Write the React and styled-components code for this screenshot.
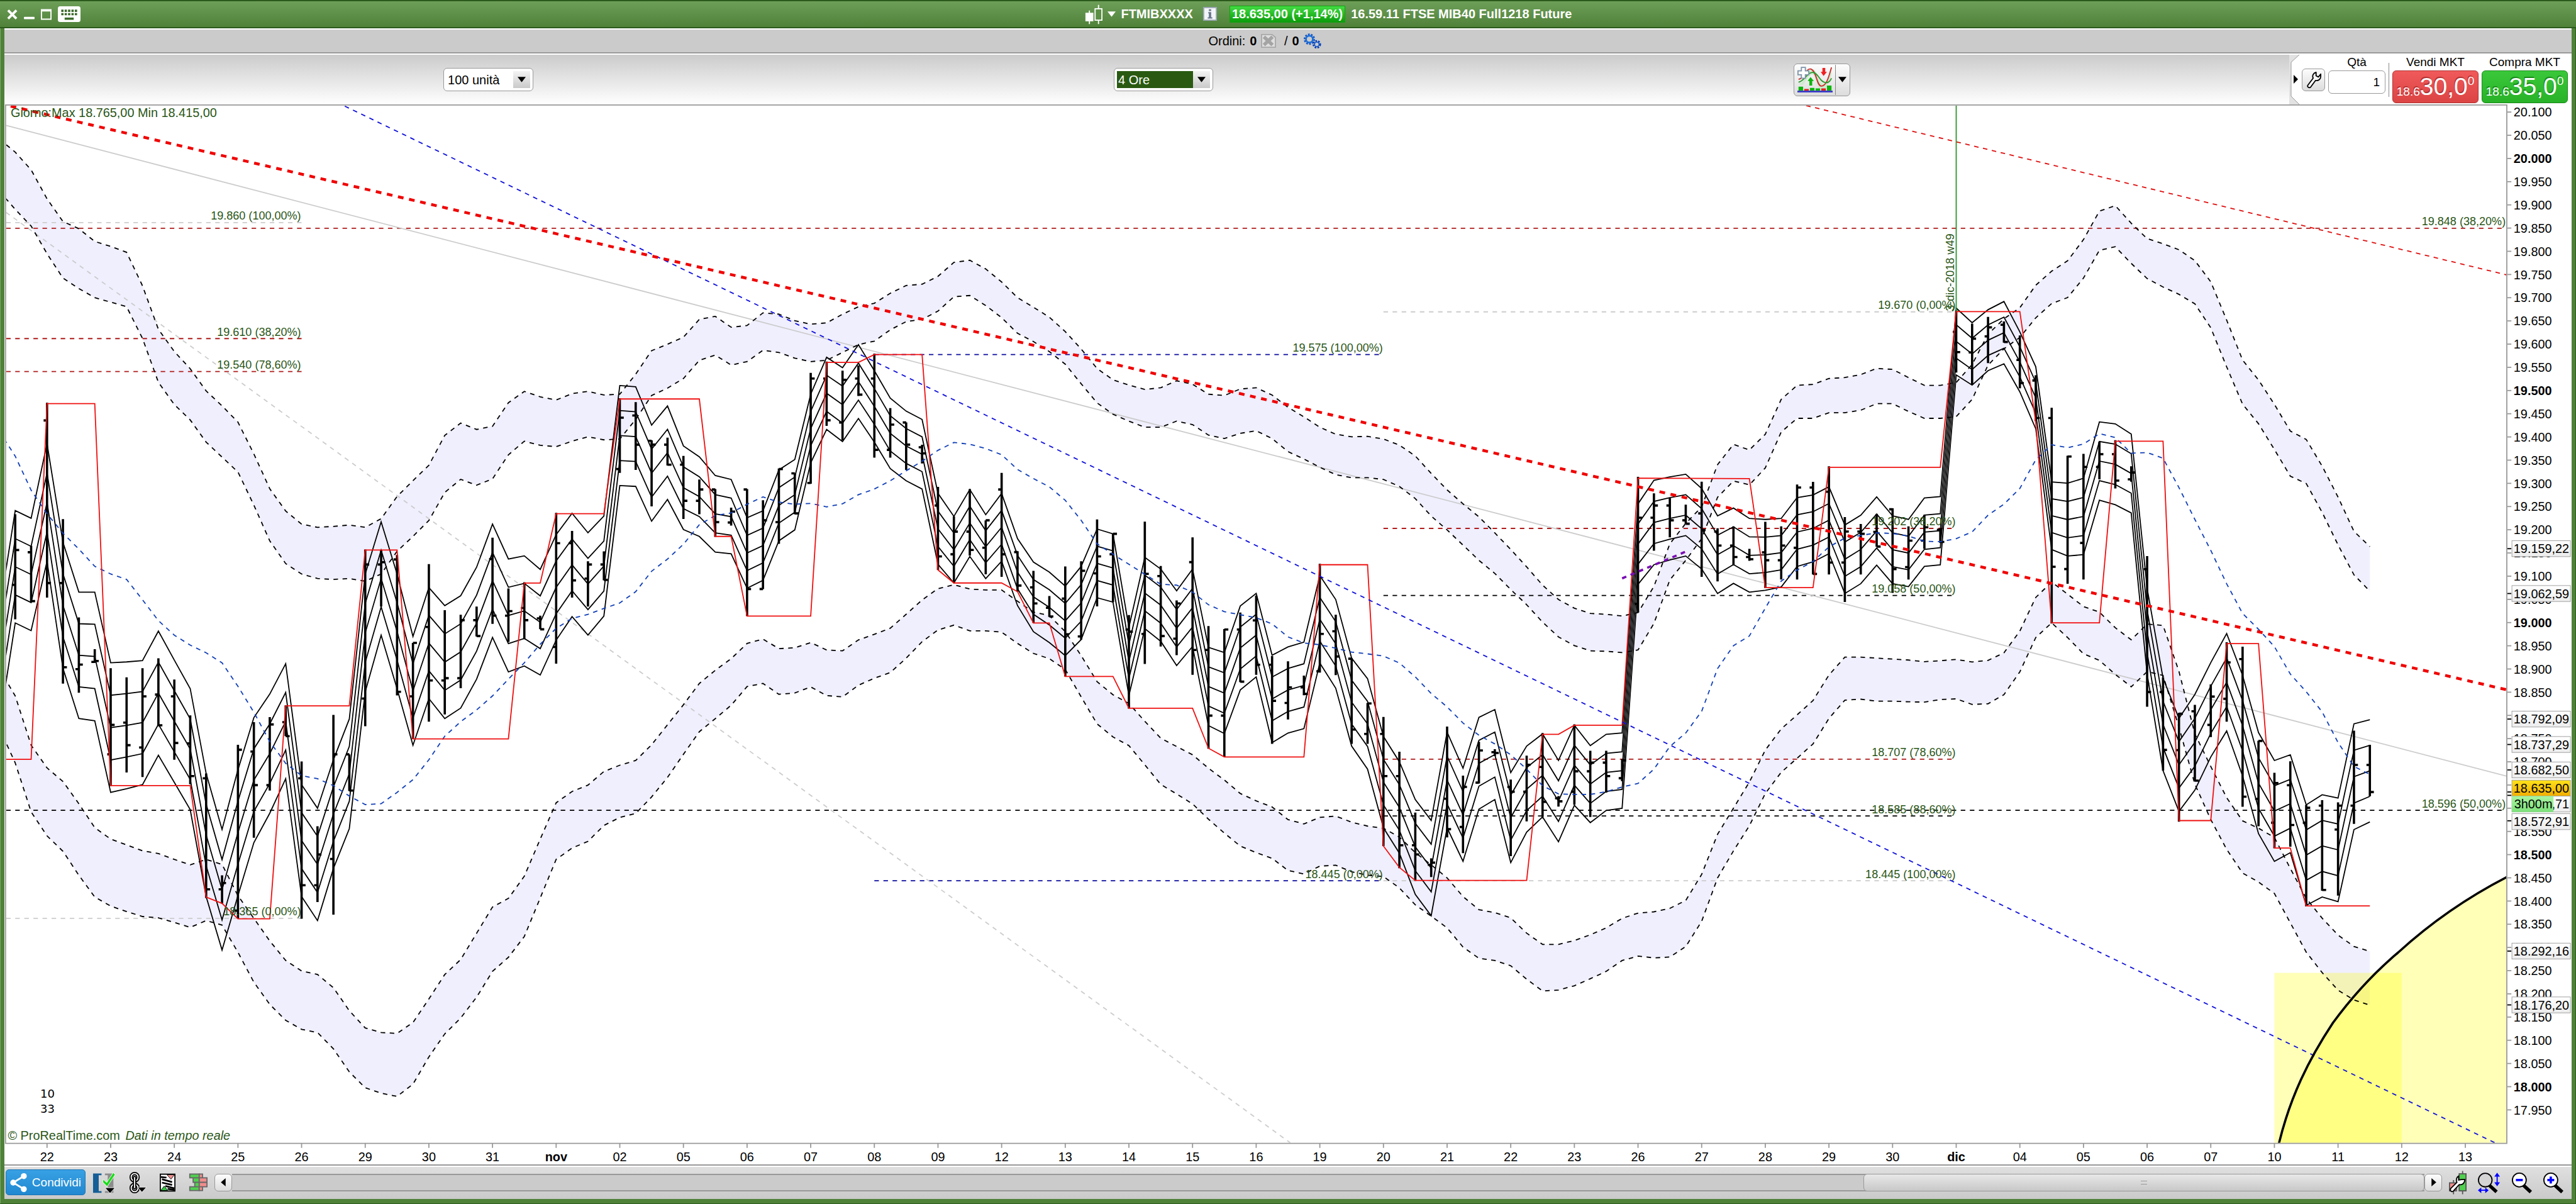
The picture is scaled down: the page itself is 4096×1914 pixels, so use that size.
import React from 'react';
import styled, { createGlobalStyle, css } from 'styled-components';

const GlobalStyle = createGlobalStyle`
  * {
    box-sizing: border-box;
  }
  body {
    margin: 0;
    font-family: 'Liberation Sans', Arial, sans-serif;
    font-size: 20px;
    color: #000;
  }
  button,
  input,
  select {
    font: inherit;
    color: inherit;
    margin: 0;
  }
`;

/* ---------- market data ---------- */

// One row per 4h bar:
// high, low, open, close, channel top, channel bottom, average,
// upper band (outer, inner), lower band (inner, outer)
const SECTIONS = [
  {
    from: -3,
    top: 500,
    unit: 0.7972,
    rows: [
      [700, 900, 800, 700, 725, 974, 325, -320, -205, 850, 980],
      [508, 740, 664, 587, 500, 748, 380, -291, -165, 909, 1057],
      [578, 702, 592, 700, 517, 765, 455, -252, -128, 1018, 1165],
      [262, 692, 301, 660, 352, 612, 507, -188, -67, 1068, 1218],
      [519, 882, 660, 846, 570, 848, 550, -138, -13, 1098, 1252],
      [736, 902, 850, 840, 680, 959, 585, -122, 10, 1147, 1305],
      [806, 836, 834, 832, 680, 964, 623, -94, 30, 1200, 1353],
      [848, 1108, 1038, 973, 836, 1122, 640, -83, 40, 1225, 1373],
      [868, 1078, 968, 1018, 834, 1114, 652, -70, 50, 1238, 1385],
      [848, 1088, 1023, 910, 831, 1105, 697, 4, 120, 1251, 1396],
      [826, 976, 906, 974, 766, 1040, 743, 100, 217, 1257, 1399],
      [873, 1050, 910, 1013, 830, 1100, 775, 149, 266, 1270, 1409],
      [952, 1104, 1014, 1086, 893, 1160, 797, 187, 300, 1282, 1420],
      [1080, 1355, 1091, 1336, 1080, 1352, 814, 236, 349, 1270, 1405],
      [1305, 1368, 1336, 1322, 1204, 1470, 836, 269, 382, 1281, 1415],
      [1017, 1400, 1383, 1028, 1072, 1350, 888, 305, 415, 1350, 1475],
      [967, 1222, 1032, 1106, 957, 1233, 945, 375, 488, 1400, 1541],
      [956, 1118, 1106, 972, 905, 1168, 1010, 452, 567, 1450, 1590],
      [930, 998, 967, 998, 838, 1092, 1058, 501, 617, 1493, 1625],
      [1054, 1401, 1091, 1327, 1105, 1352, 1085, 530, 640, 1516, 1645],
      [1197, 1364, 1327, 1259, 1157, 1405, 1092, 537, 650, 1524, 1652],
      [951, 1392, 1269, 1038, 1050, 1290, 1107, 535, 652, 1553, 1688],
      [1038, 1119, 1038, 1118, 960, 1202, 1130, 532, 650, 1604, 1739],
      [586, 976, 915, 619, 640, 900, 1149, 537, 656, 1642, 1774],
      [588, 712, 619, 614, 525, 775, 1147, 518, 640, 1652, 1786],
      [598, 908, 608, 900, 640, 893, 1122, 469, 590, 1654, 1793],
      [792, 1004, 910, 792, 778, 1018, 1094, 434, 557, 1630, 1766],
      [618, 966, 757, 875, 670, 915, 1050, 400, 522, 1578, 1706],
      [720, 950, 875, 870, 710, 959, 998, 334, 460, 1524, 1655],
      [730, 892, 870, 742, 688, 936, 966, 307, 431, 1491, 1620],
      [712, 778, 742, 777, 625, 872, 940, 321, 444, 1433, 1574],
      [560, 750, 607, 732, 530, 780, 909, 314, 430, 1375, 1517],
      [672, 790, 732, 722, 607, 856, 872, 262, 377, 1356, 1486],
      [658, 784, 715, 742, 600, 843, 836, 237, 347, 1307, 1440],
      [732, 762, 738, 762, 630, 863, 795, 249, 356, 1225, 1355],
      [505, 838, 801, 572, 553, 786, 760, 256, 359, 1145, 1270],
      [545, 692, 572, 654, 506, 734, 738, 242, 347, 1120, 1245],
      [612, 712, 650, 619, 549, 775, 729, 237, 337, 1106, 1230],
      [590, 654, 619, 653, 512, 733, 716, 245, 344, 1076, 1195],
    ],
    steps: [
      [-3, 1049], [-1, 1049], [0, 264], [3, 264], [4, 1107], [9, 1107],
      [10, 1353], [11, 1367], [12, 1401], [14, 1401], [15, 931], [19, 931],
      [20, 587], [22, 587], [23, 1004], [29, 1004], [30, 660], [31, 660],
      [32, 507], [35, 507],
    ],
  },
  {
    from: 36,
    top: 400,
    unit: 0.7653,
    rows: [
      [393, 565, 556, 438, 364, 594, 864, 384, 487, 1237, 1357],
      [402, 558, 433, 500, 367, 596, 838, 338, 442, 1226, 1348],
      [490, 642, 491, 500, 455, 676, 791, 284, 387, 1190, 1310],
      [484, 548, 500, 546, 411, 626, 763, 269, 370, 1144, 1265],
      [526, 671, 546, 629, 503, 695, 729, 253, 348, 1098, 1212],
      [580, 660, 629, 603, 528, 711, 684, 212, 306, 1049, 1160],
      [602, 712, 603, 678, 571, 747, 663, 205, 294, 1019, 1130],
      [645, 686, 679, 654, 580, 751, 657, 230, 317, 992, 1099],
      [602, 894, 603, 832, 668, 830, 637, 226, 309, 957, 1056],
      [628, 832, 832, 674, 652, 812, 620, 197, 283, 947, 1049],
      [555, 728, 678, 556, 558, 721, 632, 200, 288, 969, 1074],
      [566, 660, 566, 658, 534, 696, 637, 215, 301, 967, 1071],
      [335, 590, 588, 348, 384, 542, 635, 223, 309, 955, 1057],
      [309, 457, 348, 444, 299, 465, 643, 220, 306, 972, 1077],
      [330, 490, 449, 351, 323, 493, 636, 200, 288, 974, 1080],
      [318, 388, 348, 385, 270, 440, 615, 183, 270, 949, 1053],
      [291, 530, 348, 512, 330, 494, 602, 175, 262, 936, 1037],
      [416, 530, 512, 454, 393, 555, 583, 152, 236, 922, 1024],
      [449, 558, 449, 500, 423, 583, 560, 134, 217, 890, 991],
      [500, 543, 506, 520, 442, 602, 538, 131, 212, 857, 953],
      [597, 788, 640, 757, 612, 775, 513, 113, 193, 831, 926],
      [665, 818, 752, 700, 665, 818, 495, 81, 160, 822, 915],
      [602, 755, 700, 742, 603, 757, 499, 76, 157, 832, 928],
      [674, 798, 737, 674, 661, 808, 509, 96, 180, 834, 928],
      [565, 804, 603, 752, 612, 768, 523, 126, 208, 834, 931],
      [745, 838, 747, 824, 716, 870, 557, 162, 244, 860, 957],
      [790, 910, 828, 865, 770, 930, 578, 184, 263, 885, 980],
      [848, 896, 875, 895, 793, 955, 597, 207, 286, 893, 992],
      [780, 1033, 854, 936, 825, 985, 628, 240, 315, 930, 1017],
      [768, 948, 941, 790, 780, 948, 674, 280, 360, 985, 1080],
      [672, 872, 796, 757, 694, 852, 728, 325, 404, 1045, 1142],
      [704, 862, 752, 705, 705, 862, 752, 351, 430, 1075, 1172],
      [892, 1107, 925, 930, 920, 1077, 775, 363, 446, 1095, 1192],
    ],
    steps: [
      [36, 395], [41, 395], [42, 711], [43, 711], [44, 894], [48, 894],
      [49, 311], [51, 311], [52, 293], [55, 293], [56, 788], [57, 818],
      [60, 818], [61, 838], [62, 910], [63, 910], [64, 1033], [67, 1033],
      [68, 1106],
    ],
  },
  {
    from: 69,
    top: 550,
    unit: 0.7653,
    rows: [
      [481, 808, 739, 601, 563, 727, 602, 177, 264, 940, 1040],
      [583, 768, 606, 744, 590, 756, 625, 173, 264, 979, 1085],
      [662, 788, 750, 669, 640, 812, 627, 157, 250, 998, 1107],
      [517, 833, 574, 776, 590, 768, 643, 165, 258, 1017, 1130],
      [721, 1003, 776, 927, 770, 950, 672, 188, 282, 1048, 1165],
      [728, 1022, 927, 729, 782, 968, 688, 191, 290, 1075, 1197],
      [690, 850, 729, 849, 675, 868, 695, 176, 278, 1106, 1227],
      [651, 833, 708, 810, 646, 838, 702, 173, 272, 1123, 1242],
      [790, 992, 810, 893, 788, 989, 716, 190, 290, 1137, 1255],
      [802, 936, 898, 862, 769, 967, 746, 218, 320, 1166, 1283],
      [835, 880, 862, 877, 758, 957, 760, 240, 337, 1176, 1291],
      [578, 828, 825, 739, 605, 806, 764, 264, 356, 1161, 1273],
      [695, 834, 733, 791, 660, 864, 772, 280, 373, 1158, 1271],
      [795, 992, 796, 959, 795, 997, 781, 286, 380, 1172, 1286],
      [898, 992, 969, 899, 842, 1050, 785, 285, 380, 1181, 1294],
      [930, 1227, 969, 1066, 975, 1185, 790, 291, 384, 1186, 1297],
      [1010, 1278, 1066, 1225, 1033, 1243, 806, 305, 400, 1206, 1323],
      [1150, 1307, 1225, 1246, 1120, 1338, 838, 330, 428, 1242, 1362],
      [1255, 1298, 1270, 1265, 1168, 1387, 876, 370, 468, 1270, 1388],
      [952, 1207, 1118, 1188, 965, 1185, 907, 408, 500, 1300, 1415],
      [1065, 1243, 1183, 1091, 1048, 1262, 944, 440, 535, 1343, 1459],
      [987, 1083, 1081, 1007, 931, 1142, 972, 470, 570, 1373, 1485],
      [1004, 1020, 1011, 1013, 913, 1120, 992, 507, 600, 1380, 1490],
      [1074, 1250, 1091, 1102, 1058, 1265, 1017, 545, 637, 1392, 1502],
      [1019, 1170, 1102, 1040, 997, 1195, 1050, 585, 672, 1427, 1533],
      [967, 1160, 1045, 1125, 969, 1160, 1088, 627, 712, 1453, 1560],
      [1112, 1136, 1117, 1124, 1030, 1217, 1107, 660, 746, 1453, 1558],
      [947, 1132, 1102, 1055, 949, 1133, 1108, 680, 766, 1444, 1548],
      [1008, 1160, 1055, 1035, 996, 1173, 1108, 692, 778, 1431, 1532],
      [1008, 1104, 1035, 1066, 970, 1145, 1102, 694, 779, 1415, 1515],
      [1027, 1078, 1071, 1030, 967, 1140, 1091, 698, 782, 1393, 1490],
      [378, 690, 670, 472, 440, 625, 1083, 690, 776, 1381, 1480],
      [416, 548, 472, 444, 386, 580, 1050, 630, 715, 1378, 1484],
      [427, 517, 444, 478, 378, 569, 998, 532, 615, 1370, 1482],
      [442, 486, 478, 486, 372, 560, 967, 485, 570, 1352, 1458],
      [389, 608, 462, 500, 405, 590, 917, 447, 520, 1292, 1400],
    ],
    steps: [
      [72, 910], [73, 1002], [74, 1022], [79, 1022], [80, 580], [83, 580],
      [84, 1227], [85, 1276], [86, 1306], [93, 1306], [94, 970], [95, 970],
      [96, 949], [99, 949], [100, 381],
    ],
  },
  {
    from: 105,
    top: 350,
    unit: 0.574,
    rows: [
      [1010, 1173, 1020, 1063, 972, 1210, 1440, 815, 915, 1948, 2082],
      [1004, 1123, 1063, 1098, 948, 1179, 1370, 753, 865, 1868, 1999],
      [1073, 1110, 1098, 1105, 980, 1206, 1340, 770, 877, 1788, 1922],
      [990, 1193, 1084, 1108, 983, 1200, 1255, 722, 825, 1690, 1823],
      [1004, 1167, 1108, 1063, 980, 1190, 1172, 615, 715, 1625, 1758],
      [876, 1167, 1070, 885, 916, 1127, 1138, 572, 673, 1582, 1715],
      [868, 1152, 885, 1150, 908, 1113, 1112, 569, 673, 1538, 1671],
      [820, 1152, 898, 1115, 883, 1088, 1067, 551, 656, 1460, 1593],
      [976, 1236, 1115, 1020, 1000, 1210, 1040, 548, 656, 1405, 1537],
      [997, 1152, 1020, 1027, 970, 1180, 1032, 539, 648, 1405, 1534],
      [966, 1067, 1021, 1066, 914, 1123, 1024, 520, 628, 1408, 1540],
      [949, 1208, 952, 1135, 972, 1180, 1026, 523, 628, 1411, 1540],
      [1004, 1167, 1129, 1048, 983, 1189, 1034, 548, 652, 1414, 1542],
      [969, 1073, 1048, 1007, 917, 1127, 1050, 572, 673, 1419, 1543],
      [1010, 1055, 1015, 1052, 913, 1122, 1051, 572, 673, 1416, 1535],
      [342, 533, 408, 470, 335, 540, 1042, 563, 668, 1412, 1533],
      [383, 570, 471, 429, 380, 571, 1021, 508, 615, 1420, 1550],
      [362, 504, 422, 394, 340, 527, 970, 415, 510, 1415, 1548],
      [376, 441, 386, 439, 315, 506, 936, 368, 460, 1392, 1520],
      [419, 581, 494, 565, 408, 592, 888, 334, 425, 1325, 1450],
      [541, 682, 557, 672, 515, 705, 800, 265, 365, 1222, 1345],
      [641, 1302, 672, 1128, 868, 1075, 754, 222, 321, 1175, 1300],
      [788, 1180, 1135, 790, 872, 1095, 763, 190, 303, 1212, 1345],
      [782, 1167, 1055, 822, 857, 1091, 752, 125, 243, 1250, 1395],
      [745, 860, 822, 783, 684, 924, 720, 38, 158, 1267, 1415],
      [740, 888, 783, 864, 690, 938, 732, 21, 147, 1315, 1458],
      [820, 867, 860, 839, 721, 963, 780, 75, 198, 1352, 1496],
    ],
    steps: [
      [107, 858], [108, 1192], [111, 1192], [112, 823], [119, 823],
      [120, 346], [124, 346], [125, 685], [126, 1300], [129, 1300],
      [130, 743], [133, 743],
    ],
  },
  {
    from: 132,
    top: 1050,
    unit: 0.4783,
    rows: [
      [-149, 405, -101, 351, -30, 285, -530, -1317, -1170, 101, 276],
      [297, 640, 351, 564, 300, 640, -509, -1298, -1139, 106, 290],
      [428, 828, 565, 431, 448, 790, -401, -1276, -1112, 275, 480],
      [398, 680, 422, 677, 360, 712, -284, -1236, -1077, 505, 690],
      [323, 517, 472, 368, 243, 590, -170, -1158, -989, 625, 820],
      [168, 460, 376, 242, 136, 494, -47, -1017, -845, 740, 930],
      [184, 773, 230, 736, 290, 660, 62, -870, -708, 825, 1017],
      [530, 845, 744, 531, 500, 872, 120, -797, -636, 852, 1050],
      [648, 926, 832, 686, 603, 974, 184, -707, -541, 886, 1092],
      [606, 920, 694, 840, 582, 942, 285, -609, -443, 1000, 1200],
      [766, 1140, 832, 777, 766, 1136, 350, -578, -416, 1110, 1308],
      [749, 1082, 769, 1079, 729, 1105, 424, -480, -310, 1183, 1383],
      [757, 1100, 857, 769, 741, 1122, 537, -366, -190, 1245, 1448],
      [493, 836, 769, 619, 468, 857, 625, -240, -80, 1287, 1484],
      [545, 734, 619, 719, 453, 829, 654, -184, -20, 1305, 1503],
    ],
    steps: [
      [134, 824], [136, 824], [137, 173], [139, 173], [140, 925], [141, 925],
      [142, 1138], [146, 1138],
    ],
  },
];

const barX = k => 82 + k * 28;
const priceY = price => 1504 - (price - 18500) * 0.8166;

const bars = SECTIONS.flatMap(({ from, top, unit, rows }) =>
  rows.map((row, i) => ({
    x: barX(from + i),
    v: row.map(n => Math.round((top + n * unit) * 10) / 10),
  }))
);

const steps = SECTIONS.flatMap(({ top, unit, steps: list }) =>
  list.map(([k, n]) => `${barX(k)},${(top + n * unit).toFixed(1)}`)
).join(' ');

const column = n => bars.map(b => `${b.x},${b.v[n]}`);
const line = n => column(n).join(' ');
const area = (a, b) => [...column(a), ...column(b).reverse()].join(' ');
const channel = t =>
  bars
    .map(b => `${b.x},${(b.v[4] + (b.v[5] - b.v[4]) * t).toFixed(1)}`)
    .join(' ');

const LEVELS = [
  { y: 392, x1: 10, x2: 530, color: '#cccccc', label: '19.860 (100,00%)' },
  { y: 402, x1: 10, x2: 4410, color: '#b01c1c', label: '19.848 (38,20%)' },
  { y: 596, x1: 10, x2: 530, color: '#b01c1c', label: '19.610 (38,20%)' },
  { y: 654, x1: 10, x2: 530, color: '#b01c1c', label: '19.540 (78,60%)' },
  { y: 1426, x1: 10, x2: 4410, color: '#000000', label: '18.596 (50,00%)' },
  { y: 1616, x1: 10, x2: 530, color: '#cccccc', label: '18.365 (0,00%)' },
  { y: 624, x1: 1538, x2: 2434, color: '#0c0ca0', label: '19.575 (100,00%)' },
  { y: 1550, x1: 1538, x2: 2434, color: '#0c0ca0', label: '18.445 (0,00%)' },
  { y: 549, x1: 2434, x2: 3442, color: '#cccccc', label: '19.670 (0,00%)' },
  { y: 930, x1: 2434, x2: 3442, color: '#b01c1c', label: '19.202 (38,20%)' },
  { y: 1048, x1: 2434, x2: 3442, color: '#000000', label: '19.058 (50,00%)' },
  { y: 1336, x1: 2434, x2: 3442, color: '#b01c1c', label: '18.707 (78,60%)' },
  { y: 1436, x1: 2434, x2: 3442, color: '#000000', label: '18.585 (88,60%)' },
  { y: 1550, x1: 2434, x2: 3442, color: '#cccccc', label: '18.445 (100,00%)' },
];

const DAYS = [
  '22', '23', '24', '25', '26', '29', '30', '31', 'nov', '02', '05', '06',
  '07', '08', '09', '12', '13', '14', '15', '16', '19', '20', '21', '22',
  '23', '26', '27', '28', '29', '30', 'dic', '04', '05', '06', '07', '10',
  '11', '12', '13',
];

const PRICES = Array.from({ length: 44 }, (_, i) => 20100 - i * 50);

// these two sit completely behind the last-price tags
const HIDDEN_PRICES = [18650, 18600];

const TAGS = [
  { price: 19159.22, label: '19.159,22' },
  { price: 19062.59, label: '19.062,59' },
  { price: 18792.09, label: '18.792,09' },
  { price: 18737.29, label: '18.737,29' },
  { price: 18682.5, label: '18.682,50' },
  { price: 18627.71, label: '18.627,71', y: 1415 },
  { price: 18635, label: '18.635,00', y: 1387, fill: 'url(#gold)' },
  { price: 18572.91, label: '18.572,91', y: 1446 },
  { price: 18292.16, label: '18.292,16' },
  { price: 18176.2, label: '18.176,20' },
];

const thousands = n =>
  `${Math.floor(n / 1000)}.${String(n % 1000).padStart(3, '0')}`;

/* ---------- window ---------- */

const Window = styled.div`
  display: flex;
  flex-direction: column;
  height: 100vh;
  padding: 0 7px 7px;
  background: #4f8139;
  border-bottom: 1px solid #2b5a1c;
  box-shadow: inset 1px 0 #7ba868, inset -1px 0 #2b5a1c;
`;

const TitleBar = styled.header`
  display: flex;
  flex: none;
  height: 45px;
  margin: 0 -7px;
  padding: 0 7px;
  border-top: 2px solid #2b5a1c;
  border-bottom: 2px solid #2b5a1c;
  background: linear-gradient(#6e9f59, #4f8139);
  color: #fff;
  font-weight: bold;
`;

const WindowControls = styled.div`
  display: flex;
  align-items: center;
  gap: 10px;
  flex: 0 0 42%;
  padding-left: 4px;
`;

const PlainButton = styled.button`
  display: flex;
  padding: 0;
  border: 0;
  background: none;
`;

const Instrument = styled.div`
  display: flex;
  align-items: center;
  padding-left: 4px;
  white-space: nowrap;
`;

const SymbolButton = styled(PlainButton)`
  align-items: center;
  gap: 8px;
  margin-right: 16px;
`;

const Quote = styled.span`
  margin: 0 9px 0 20px;
  padding: 0 3px;
  height: 27px;
  line-height: 24px;
  border: 1px solid #12a012;
  background: linear-gradient(#42dc42, #0b9c0b);
`;

const OrdersBar = styled.div`
  display: flex;
  align-items: center;
  flex: none;
  gap: 7px;
  height: 40px;
  padding-left: 46.9%;
  border-top: 2px solid #fff;
  border-bottom: 2px solid #999;
  background: #cbcbcb;
`;

const Toolbar = styled.div`
  display: flex;
  flex: none;
  height: 81px;
  border-top: 2px solid #fff;
  background: linear-gradient(#cbcbcb, #fff);
`;

const Tools = styled.div`
  display: flex;
  flex: 1;
  align-items: center;
  justify-content: space-between;
  padding: 0 17.1%;
`;

const raised = css`
  border: 1px solid #999;
  border-radius: 6px;
  background: linear-gradient(#fdfdfd, #dcdcdc);
`;

const Picker = styled.div`
  display: flex;
  align-items: center;
  width: ${p => p.$width};
  height: 37px;
  padding: 4px;
  border: 1px solid #999;
  border-radius: 6px;
  background: #fff;
`;

const PickerSelect = styled.select`
  flex: 1;
  min-width: 0;
  height: 27px;
  padding: 0 2px;
  border: 0;
  appearance: none;
  background: ${p => (p.$selected ? '#2a5a12' : '#fff')};
  color: ${p => (p.$selected ? '#fff' : '#000')};
`;

const PickerArrow = styled.span`
  display: flex;
  align-items: center;
  justify-content: center;
  width: 27px;
  height: 27px;
  background: linear-gradient(#f4f4f4, #c9c9c9);
`;

const StudyButton = styled.button`
  ${raised}
  display: flex;
  align-items: center;
  gap: 4px;
  height: 52px;
  padding: 0 5px;
`;

const Divider = styled.span`
  width: 1px;
  height: ${p => p.$height};
  background: #888;
`;

const OrderPanel = styled.section`
  display: flex;
  flex: none;
  background: #fff;
  padding-right: 6px;
`;

const OrderFields = styled.div`
  display: flex;
  align-items: flex-end;
  gap: 5px;
`;

const Field = styled.label`
  display: flex;
  flex-direction: column;
  align-items: center;
  gap: 1px;
  padding-bottom: ${p => p.$bottom || '2px'};
  font-size: 19px;
  line-height: 24px;
`;

const WrenchButton = styled.button`
  ${raised}
  display: flex;
  align-items: center;
  justify-content: center;
  width: 37px;
  height: 36px;
  margin: 0 0 21px;
  padding: 0;
`;

const Quantity = styled.input`
  width: 91px;
  height: 37px;
  padding: 0 8px;
  border: 1px solid #999;
  border-radius: 6px;
  text-align: right;
`;

const DealButton = styled.button`
  display: flex;
  align-items: flex-end;
  justify-content: center;
  width: 137px;
  height: 52px;
  padding: 0 0 5px;
  border: 1px solid ${p => p.$edge};
  border-radius: 6px;
  background: linear-gradient(${p => p.$from}, ${p => p.$to});
  color: #fff;
  text-shadow: -1px -2px ${p => p.$edge};
`;

const Small = styled.span`
  font-size: 19px;
  line-height: 24px;
`;

const Big = styled.span`
  font-size: 39px;
  line-height: 40px;
`;

const Sup = styled.span`
  align-self: flex-start;
  padding-top: 4px;
  font-size: 19px;
`;

const Chart = styled.svg`
  display: block;
  flex: 1;
  min-height: 0;
  width: 100%;
  background: #fff;
  font-size: 22px;
`;

const Footer = styled.footer`
  display: flex;
  align-items: center;
  flex: none;
  height: 55px;
  padding: 0 2px;
  border-top: 2px solid #999;
  box-shadow: inset 0 2px #fff;
  background: linear-gradient(#e0e0e0, #cacaca);
`;

const ShareButton = styled.button`
  display: flex;
  align-items: center;
  gap: 8px;
  height: 41px;
  width: 127px;
  padding: 0 6px;
  border: 1px solid #1c74b4;
  border-radius: 5px;
  background: linear-gradient(#38a0e4, #2088d0);
  color: #fff;
  font-size: 19px;
`;

const FooterTools = styled.div`
  display: flex;
  align-items: center;
  gap: ${p => p.$gap};
  padding: 0 ${p => p.$pad};
`;

const ScrollButton = styled.button`
  ${raised}
  display: flex;
  align-items: center;
  justify-content: center;
  flex: none;
  width: 28px;
  height: 28px;
  padding: 0;
`;

const Track = styled.div`
  display: flex;
  flex: 1;
  height: 28px;
  border: solid #999;
  border-width: 2px 0;
  background: #cbcbcb;
`;

const Thumb = styled.div`
  ${raised}
  display: flex;
  align-items: center;
  justify-content: center;
  width: 25.6%;
  height: 28px;
  margin: -2px 0 0 auto;
  background: linear-gradient(#e8e8e8, #c8c8c8);
`;

const Grip = styled.span`
  width: 10px;
  height: 6px;
  border: solid #999;
  border-width: 1px 0;
`;

/* ---------- icons ---------- */

const CARETS = {
  down: 'M0 2H12L6 10Z',
  left: 'M9 0V12L2 6Z',
  right: 'M3 0V12L10 6Z',
};

const Caret = ({ dir = 'down', color = '#000' }) => (
  <svg width="13" height="13" viewBox="0 0 12 12">
    <path d={CARETS[dir]} fill={color} />
  </svg>
);

const WrenchIcon = () => (
  <svg width="24" height="28" viewBox="0 0 26 30">
    <path
      d="M17 2C12 3 10 8 12 12L3 24C1 27 5 30 8 27L16 16C21 17 25 14 25 9V5L21 10L17 8Z"
      fill="#fff"
      stroke="#000"
      strokeWidth="2"
      strokeLinejoin="round"
    />
  </svg>
);

const CandleIcon = () => (
  <svg width="28" height="32" viewBox="0 0 31 34">
    <path d="M8 10V34M24 0V34" stroke="#fff" strokeWidth="2" />
    <rect x="1" y="14" width="14" height="15" fill="#fff" />
    <rect x="18" y="7" width="12" height="20" fill="#5c8e46" stroke="#fff" strokeWidth="2" />
  </svg>
);

const InfoIcon = () => (
  <svg width="22" height="23" viewBox="0 0 24 25">
    <rect x="1" y="1" width="22" height="22" fill="#f2f4f7" stroke="#9aa6b4" strokeWidth="2" />
    <path d="M9 9H14V18H16V20H8V18H10V11H9ZM10 4H14V7H10Z" fill="#66758a" />
  </svg>
);

const GearsIcon = () => (
  <svg width="28" height="24" viewBox="0 0 31 26">
    <circle cx="10" cy="10" r="8" fill="none" stroke="#1457c4" strokeWidth="4" strokeDasharray="3 2" />
    <circle cx="10" cy="10" r="6" fill="none" stroke="#1d6fd8" strokeWidth="3" />
    <circle cx="23" cy="19" r="6" fill="none" stroke="#0a3fb0" strokeWidth="3" strokeDasharray="3 2" />
    <circle cx="23" cy="19" r="4" fill="none" stroke="#1a5fd0" strokeWidth="2" />
  </svg>
);

const CancelDocIcon = () => (
  <svg width="24" height="22" viewBox="0 0 26 24">
    <path d="M1 1H19L25 6V23H1Z" fill="#dedede" stroke="#a8a8a8" strokeWidth="2" />
    <path d="M5 5L20 19M20 5L5 19" stroke="#a4a4a4" strokeWidth="6" />
  </svg>
);

const StudyIcon = () => (
  <svg width="56" height="42" viewBox="0 0 62 46">
    <path d="M2 28C12 34 16 4 26 4C36 4 36 30 46 30C54 30 56 10 60 2V14C54 40 42 44 38 38C32 26 30 10 24 14C14 20 10 42 2 28Z" fill="#cdeccd" />
    <path d="M2 22C14 20 14 2 24 4C34 8 34 34 42 34C52 34 56 14 60 1" fill="none" stroke="#cc2a2a" strokeWidth="2" />
    <path d="M2 27C12 26 18 8 28 10C38 12 38 26 50 28C56 28 58 24 60 20" fill="none" stroke="#2f9a2f" strokeWidth="2" />
    <path d="M7 1H14V7H20V14H14V20H7V14H1V7H7Z" fill="#fff" stroke="#7d93a8" strokeWidth="2" />
    <path d="M44 2H49V9H52L46 16L41 9H44Z" fill="#f02020" />
    <path d="M21 33V25H18L23 18L29 25H26V33Z" fill="#0cb40c" />
    <path d="M2 35H10V42H2ZM22 37H30V42H22ZM32 38H40V42H32ZM52 33H60V42H52Z" fill="#0cb40c" />
    <path d="M12 39H20V42H12ZM42 38H50V42H42Z" fill="#e02020" />
    <rect x="0" y="42" width="62" height="3" fill="#3434c4" />
  </svg>
);

const ShareIcon = () => (
  <svg width="27" height="30" viewBox="0 0 28 32">
    <path d="M23 5L5 16L23 27" fill="none" stroke="#fff" strokeWidth="3" />
    <circle cx="23" cy="5" r="5" fill="#fff" />
    <circle cx="5" cy="16" r="5" fill="#fff" />
    <circle cx="23" cy="27" r="5" fill="#fff" />
  </svg>
);

const TemplateIcon = () => (
  <svg width="37" height="36" viewBox="0 0 41 40">
    <path d="M1 4H16V7H11V35H16V38H1Z" fill="#155e96" />
    <path d="M22 4H37V38H22V35H27V7H22Z" fill="#8c8c8c" />
    <path d="M19 14L25 20L37 2L40 6L26 27L18 19Z" fill="#18dc18" stroke="#fff" strokeWidth="1" />
    <path d="M22 29H40L31 39Z" fill="#000" stroke="#fff" strokeWidth="1" />
  </svg>
);

const ChainIcon = () => (
  <svg width="28" height="36" viewBox="0 0 31 40">
    <g fill="none" stroke="#000" strokeWidth="6">
      <rect x="4" y="4" width="12" height="13" rx="6" />
      <rect x="4" y="23" width="12" height="13" rx="6" />
    </g>
    <g fill="none" stroke="#fff" strokeWidth="2">
      <rect x="4" y="4" width="12" height="13" rx="6" />
      <rect x="4" y="23" width="12" height="13" rx="6" />
    </g>
    <rect x="8" y="9" width="4" height="22" rx="2" fill="#fff" stroke="#000" strokeWidth="2" />
    <path d="M15 28H31L23 37Z" fill="#000" stroke="#fff" strokeWidth="1" />
  </svg>
);

const ReportIcon = () => (
  <svg width="25" height="30" viewBox="0 0 28 32">
    <rect x="1" y="1" width="26" height="30" fill="#fff" stroke="#000" strokeWidth="2" />
    <path d="M2 6L12 7M4 10L22 15M4 16L22 20M10 22L26 26M14 27L26 29" stroke="#000" strokeWidth="3" />
    <path d="M13 2H26L20 10Z" fill="#f09090" stroke="#000" strokeWidth="1" />
    <path d="M2 30L8 22L14 30Z" fill="#30c840" stroke="#000" strokeWidth="1" />
  </svg>
);

const DepthIcon = () => (
  <svg width="30" height="31" viewBox="0 0 34 34">
    <g stroke="#666" strokeWidth="2">
      <path d="M2 2H19V9H2ZM8 9H19V17H8ZM11 17H19V25H11ZM2 25H19V32H2Z" fill="#4fd04f" />
      <path d="M19 2H25V9H19ZM19 9H33V17H19ZM19 17H33V25H19ZM19 25H25V32H19Z" fill="#f08c8c" />
    </g>
  </svg>
);

const CandleSetupIcon = () => (
  <svg width="28" height="38" viewBox="0 0 31 41">
    <path d="M8 16V41M24 0V41" stroke="#555" strokeWidth="2" />
    <rect x="1" y="21" width="12" height="14" fill="#f08c8c" stroke="#555" strokeWidth="2" />
    <rect x="18" y="5" width="12" height="30" fill="#4fd04f" stroke="#555" strokeWidth="2" />
    <path
      d="M17 9C13 11 12 16 14 20L3 31C1 35 5 38 8 35L18 24C24 25 28 21 28 15H22L17 16Z"
      fill="#fff"
      stroke="#000"
      strokeWidth="2"
    />
  </svg>
);

const ZoomIcon = ({ kind }) => (
  <svg
    width={kind === 'fit' ? 36 : 32}
    height="34"
    viewBox={kind === 'fit' ? '0 0 40 37' : '0 0 35 37'}
  >
    <path d="M19 22L33 35" stroke="#000" strokeWidth="6" />
    <circle
      cx="13"
      cy="14"
      r="12"
      fill={kind === 'fit' ? '#d4d4d4' : '#fff'}
      stroke="#000"
      strokeWidth="2"
    />
    {kind !== 'fit' && <path d="M7 14H19" stroke="#00f" strokeWidth="4" />}
    {kind === 'in' && <path d="M13 8V20" stroke="#00f" strokeWidth="4" />}
    {kind === 'fit' && (
      <path
        d="M34 1L39 8H35V18H39L34 25L29 18H33V8H29ZM0 32L6 27V31H13V27L19 32L13 37V33H6V37Z"
        fill="#00f"
      />
    )}
  </svg>
);

/* ---------- chart ---------- */

const Dashed = ({ color = '#000', width = 2, dash = '8 8', ...rest }) => (
  <polyline
    fill="none"
    stroke={color}
    strokeWidth={width}
    strokeDasharray={dash}
    {...rest}
  />
);

const ARC =
  'M4010 2012C4030 1930 4062 1865 4105 1800C4138 1755 4175 1714 4220 1676C4276 1625 4340 1580 4412 1543';

const PriceChart = () => (
  <Chart viewBox="8 184 4516 1865" role="img" aria-label="FTSE MIB40 Full1218 Future, 4 Ore">
    <defs>
      <clipPath id="plot">
        <rect x="10" y="186" width="4400" height="1825" />
      </clipPath>
      <linearGradient id="gold" x2="0" y2="1">
        <stop offset="0" stopColor="#ffe21a" />
        <stop offset="1" stopColor="#f2ae00" />
      </linearGradient>
      <linearGradient id="silver" x2="0" y2="1">
        <stop offset="0" stopColor="#fff" />
        <stop offset="1" stopColor="#ececec" />
      </linearGradient>
      <linearGradient id="mint" x2="0" y2="1">
        <stop offset="0" stopColor="#a8f5a0" />
        <stop offset="1" stopColor="#7de07a" />
      </linearGradient>
    </defs>

    <g clipPath="url(#plot)">
      <polygon points={area(7, 8)} fill="#f0effe" />
      <polygon points={area(9, 10)} fill="#f0effe" />
      <rect x="4002" y="1712" width="224" height="300" fill="#ff0" fillOpacity="0.28" />
      <path d={`${ARC}V2012Z`} fill="#ff0" fillOpacity="0.28" />

      {LEVELS.map(l => (
        <line
          key={l.label + l.x1}
          x1={l.x1}
          x2={l.x2}
          y1={l.y}
          y2={l.y}
          stroke={l.color}
          strokeWidth="2"
          strokeDasharray="8 8"
        />
      ))}
      <line x1="10" y1="221" x2="4411" y2="1366" stroke="#ccc" strokeWidth="2" />
      <Dashed points="10,374 2270,2011" color="#ccc" />

      {[7, 8, 9, 10].map(n => (
        <Dashed key={n} points={line(n)} />
      ))}
      {[0, 0.25, 0.5, 0.75, 1].map(t => (
        <polyline key={t} points={channel(t)} fill="none" stroke="#000" strokeWidth="2" />
      ))}
      {bars.map(({ x, v }) => (
        <path
          key={x}
          d={`M${x} ${v[0]}V${v[1]}M${x - 6} ${v[2]}H${x}M${x} ${v[3]}H${x + 7}`}
          stroke="#000"
          strokeWidth="4"
        />
      ))}
      <Dashed points={line(6)} color="#1240b8" />
      <polyline points={steps} fill="none" stroke="#f01010" strokeWidth="2" />

      <Dashed points="606,187 4390,2011" color="#1010dc" />
      <Dashed points="18,187 4411,1214" color="#f00000" width={5} dash="10 10" />
      <Dashed points="3178,186 4411,484" color="#e01010" />
      <Dashed points="2854,1018 2968,970" color="#7a0cb4" width={4} />
      <line x1="3442" x2="3442" y1="186" y2="548" stroke="#2e942e" strokeWidth="2" />
      <path d={ARC} fill="none" stroke="#000" strokeWidth="4" />
    </g>

    <g fill="#2a5616">
      {LEVELS.map(l => (
        <text key={l.label + l.x1} x={l.x2 - 1} y={l.y - 5} textAnchor="end" fontSize="20">
          {l.label}
        </text>
      ))}
      <text transform="translate(3438 548) rotate(-90)" fontSize="20">
        3-dic-2018 w49
      </text>
      <text x="18" y="206">
        Giorno:Max 18.765,00 Min 18.415,00
      </text>
      <text x="13" y="2006">
        © ProRealTime.com
      </text>
      <text x="220" y="2006" fontStyle="italic">
        Dati in tempo reale
      </text>
    </g>
    <g fontFamily="'DejaVu Sans', sans-serif" fontSize="20">
      <text x="70" y="1932">
        10
      </text>
      <text x="70" y="1958">
        33
      </text>
    </g>

    <path d="M9 2012V185H4411V2012Z" fill="none" stroke="#999" strokeWidth="2" />
    {DAYS.map((day, i) => (
      <g key={i}>
        <path d={`M${barX(i * 4)} 2012V2020`} stroke="#999" strokeWidth="2" />
        <text
          x={barX(i * 4)}
          y="2043"
          textAnchor="middle"
          fontWeight={/\D/.test(day) ? 'bold' : 'normal'}
        >
          {day}
        </text>
      </g>
    ))}
    {PRICES.map(price => (
      <g key={price}>
        <path d={`M4412 ${priceY(price)}H4419`} stroke="#999" strokeWidth="2" />
        {!HIDDEN_PRICES.includes(price) && (
          <text x="4423" y={priceY(price) + 8} fontWeight={price % 500 ? 'normal' : 'bold'}>
            {thousands(price)}
          </text>
        )}
      </g>
    ))}
    {TAGS.map(({ price, label, fill = 'url(#silver)', y = priceY(price) }) => (
      <g key={label}>
        <path d={`M4412 ${priceY(price)}H4419`} stroke="#000" strokeWidth="2" />
        <rect x="4420" y={y - 14} width="103" height="28" fill={fill} stroke="#999" />
        <text x="4423" y={y + 8}>
          {label}
        </text>
      </g>
    ))}
    <rect x="4420" y="1401" width="73" height="28" fill="url(#mint)" />
    <text x="4424" y="1423">
      3h00m
    </text>
  </Chart>
);

/* ---------- page ---------- */

const App = () => (
  <>
    <GlobalStyle />
    <Window>
      <TitleBar>
        <WindowControls>
          <PlainButton aria-label="Chiudi">
            <svg width="17" height="18" viewBox="0 0 18 18">
              <path d="M2 2L16 16M16 2L2 16" stroke="#fff" strokeWidth="4" />
            </svg>
          </PlainButton>
          <PlainButton aria-label="Riduci">
            <svg width="17" height="18" viewBox="0 0 18 18">
              <rect y="13" width="18" height="4" rx="1" fill="#fff" />
            </svg>
          </PlainButton>
          <PlainButton aria-label="Ingrandisci">
            <svg width="17" height="18" viewBox="0 0 18 18">
              <path d="M1 1H17V17H1ZM1 3H17" fill="none" stroke="#fff" strokeWidth="2" />
            </svg>
          </PlainButton>
          <PlainButton aria-label="Tastiera">
            <svg width="36" height="27" viewBox="0 0 40 30">
              <rect y="1" width="40" height="28" rx="4" fill="#fff" />
              <path d="M6 9H35M6 15H35" stroke="#3c6a2a" strokeWidth="4" strokeDasharray="4 2" />
              <path d="M12 23H28" stroke="#3c6a2a" strokeWidth="4" />
            </svg>
          </PlainButton>
        </WindowControls>
        <Instrument>
          <SymbolButton>
            <CandleIcon />
            <Caret color="#fff" />
            FTMIBXXXX
          </SymbolButton>
          <InfoIcon />
          <Quote>18.635,00 (+1,14%)</Quote>
          <span>16.59.11 FTSE MIB40 Full1218 Future</span>
        </Instrument>
      </TitleBar>

      <OrdersBar>
        <span>Ordini:</span>
        <b>0</b>
        <CancelDocIcon />
        <span>&nbsp;/</span>
        <b>0</b>
        <GearsIcon />
      </OrdersBar>

      <Toolbar>
        <Tools>
          <Picker $width="143px">
            <PickerSelect aria-label="Unità">
              <option>100 unità</option>
            </PickerSelect>
            <PickerArrow>
              <Caret />
            </PickerArrow>
          </Picker>
          <Picker $width="158px">
            <PickerSelect aria-label="Periodo" $selected>
              <option>4 Ore</option>
            </PickerSelect>
            <PickerArrow>
              <Caret />
            </PickerArrow>
          </Picker>
          <StudyButton aria-label="Indicatori">
            <StudyIcon />
            <Divider $height="48px" />
            <Caret />
          </StudyButton>
        </Tools>
        <OrderPanel>
          <svg width="20" height="79" viewBox="0 0 20 79">
            <path d="M0 0H16L3 12V66L16 79H0Z" fill="#e2e2e2" />
            <path d="M16 0L3 12V66L16 79" fill="none" stroke="#999" />
            <path d="M7 32L14 39L7 46Z" />
          </svg>
          <OrderFields>
            <WrenchButton aria-label="Impostazioni ordine">
              <WrenchIcon />
            </WrenchButton>
            <Field $bottom="17px">
              Qtà
              <Quantity defaultValue="1" />
            </Field>
            <Field as="div" $bottom="12px">
              <Divider $height="54px" />
            </Field>
            <Field>
              Vendi MKT
              <DealButton $from="#f05a5a" $to="#dc4444" $edge="#b03030">
                <Small>18.6</Small>
                <Big>30,0</Big>
                <Sup>0</Sup>
              </DealButton>
            </Field>
            <Field>
              Compra MKT
              <DealButton $from="#3ac83a" $to="#28b228" $edge="#178a17">
                <Small>18.6</Small>
                <Big>35,0</Big>
                <Sup>0</Sup>
              </DealButton>
            </Field>
          </OrderFields>
        </OrderPanel>
      </Toolbar>

      <PriceChart />

      <Footer>
        <ShareButton>
          <ShareIcon />
          Condividi
        </ShareButton>
        <FooterTools $gap="21px" $pad="11px">
          <PlainButton aria-label="Modello">
            <TemplateIcon />
          </PlainButton>
          <PlainButton aria-label="Collega">
            <ChainIcon />
          </PlainButton>
          <PlainButton aria-label="Rapporto">
            <ReportIcon />
          </PlainButton>
          <PlainButton aria-label="Book">
            <DepthIcon />
          </PlainButton>
        </FooterTools>
        <ScrollButton aria-label="Indietro">
          <Caret dir="left" />
        </ScrollButton>
        <Track>
          <Thumb>
            <Grip />
          </Thumb>
        </Track>
        <ScrollButton aria-label="Avanti">
          <Caret dir="right" />
        </ScrollButton>
        <FooterTools $gap="18px" $pad="11px">
          <PlainButton aria-label="Stile grafico">
            <CandleSetupIcon />
          </PlainButton>
          <PlainButton aria-label="Adatta">
            <ZoomIcon kind="fit" />
          </PlainButton>
          <PlainButton aria-label="Riduci zoom">
            <ZoomIcon kind="out" />
          </PlainButton>
          <PlainButton aria-label="Aumenta zoom">
            <ZoomIcon kind="in" />
          </PlainButton>
        </FooterTools>
      </Footer>
    </Window>
  </>
);

export default App;
